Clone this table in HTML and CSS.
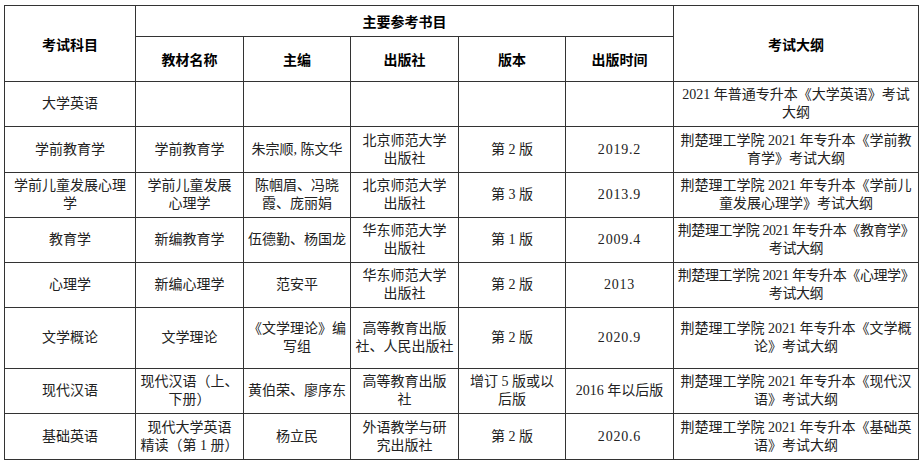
FILE: index.html
```html
<!DOCTYPE html>
<html lang="zh-CN">
<head>
<meta charset="utf-8">
<title>主要参考书目</title>
<link rel="stylesheet" href="styles.css">
</head>
<body>
<div class="page">
<table class="books">
  <colgroup>
    <col class="c1"><col class="c2"><col class="c3"><col class="c4"><col class="c5"><col class="c6"><col class="c7">
  </colgroup>
  <thead>
    <tr class="h1">
      <th rowspan="2">考试科目</th>
      <th colspan="5">主要参考书目</th>
      <th rowspan="2">考试大纲</th>
    </tr>
    <tr class="h2">
      <th>教材名称</th>
      <th>主编</th>
      <th>出版社</th>
      <th>版本</th>
      <th>出版时间</th>
    </tr>
  </thead>
  <tbody>
    <tr class="r45">
      <td>大学英语</td><td></td><td></td><td></td><td></td><td></td>
      <td class="outline">2021 年普通专升本《大学英语》考试<br>大纲</td>
    </tr>
    <tr class="r46">
      <td>学前教育学</td><td>学前教育学</td><td>朱宗顺, 陈文华</td><td>北京师范大学<br>出版社</td><td>第 2 版</td><td class="num">2019.2</td>
      <td class="outline">荆楚理工学院 2021 年专升本《学前教<br>育学》考试大纲</td>
    </tr>
    <tr class="r45">
      <td>学前儿童发展心理<br>学</td><td>学前儿童发展<br>心理学</td><td>陈帼眉、冯晓<br>霞、庞丽娟</td><td>北京师范大学<br>出版社</td><td>第 3 版</td><td class="num">2013.9</td>
      <td class="outline">荆楚理工学院 2021 年专升本《学前儿<br>童发展心理学》考试大纲</td>
    </tr>
    <tr class="r45">
      <td>教育学</td><td>新编教育学</td><td>伍德勤、杨国龙</td><td>华东师范大学<br>出版社</td><td>第 1 版</td><td class="num">2009.4</td>
      <td class="outline tight">荆楚理工学院 2021 年专升本《教育学》<br>考试大纲</td>
    </tr>
    <tr class="r45">
      <td>心理学</td><td>新编心理学</td><td>范安平</td><td>华东师范大学<br>出版社</td><td>第 2 版</td><td class="num">2013</td>
      <td class="outline tight">荆楚理工学院 2021 年专升本《心理学》<br>考试大纲</td>
    </tr>
    <tr class="r61">
      <td>文学概论</td><td>文学理论</td><td>《文学理论》编<br>写组</td><td>高等教育出版<br>社、人民出版社</td><td>第 2 版</td><td class="num">2020.9</td>
      <td class="outline">荆楚理工学院 2021 年专升本《文学概<br>论》考试大纲</td>
    </tr>
    <tr class="r45">
      <td>现代汉语</td><td>现代汉语（上、<br>下册）</td><td>黄伯荣、廖序东</td><td>高等教育出版<br>社</td><td>增订 5 版或以<br>后版</td><td>2016 年以后版</td>
      <td class="outline">荆楚理工学院 2021 年专升本《现代汉<br>语》考试大纲</td>
    </tr>
    <tr class="r46">
      <td>基础英语</td><td>现代大学英语<br>精读（第 1 册）</td><td>杨立民</td><td>外语教学与研<br>究出版社</td><td>第 2 版</td><td class="num">2020.6</td>
      <td class="outline">荆楚理工学院 2021 年专升本《基础英<br>语》考试大纲</td>
    </tr>
  </tbody>
</table>
</div>
</body>
</html>
```

FILE: styles.css
```css
html, body {
  margin: 0;
  padding: 0;
  background: #ffffff;
}

.page {
  padding: 5px 0 0 4px;
}

.books {
  border-collapse: collapse;
  table-layout: fixed;
  width: 915px;
  font-family: "Liberation Serif", "Noto Sans CJK SC", serif;
  font-size: 14px;
  line-height: 18px;
  color: #222222;
}

.c1 { width: 131px; }
.c2 { width: 108px; }
.c3 { width: 107px; }
.c4 { width: 108px; }
.c5 { width: 107px; }
.c6 { width: 108px; }
.c7 { width: 245px; }

.books th,
.books td {
  border: 1px solid #333333;
  padding: 0 2px;
  text-align: center;
  vertical-align: middle;
  white-space: nowrap;
}

.books th {
  font-family: "Noto Sans CJK SC", sans-serif;
  font-weight: 700;
  color: #000000;
}

.books td {
  font-weight: 400;
}

.books td.outline {
  padding: 0 1px;
}

.books td.tight {
  letter-spacing: -0.4px;
}

.books td.num {
  letter-spacing: 0.8px;
}

.h1 { height: 31px; }
.h2 { height: 45px; }
.r45 { height: 45px; }
.r46 { height: 46px; }
.r61 { height: 61px; }
```
